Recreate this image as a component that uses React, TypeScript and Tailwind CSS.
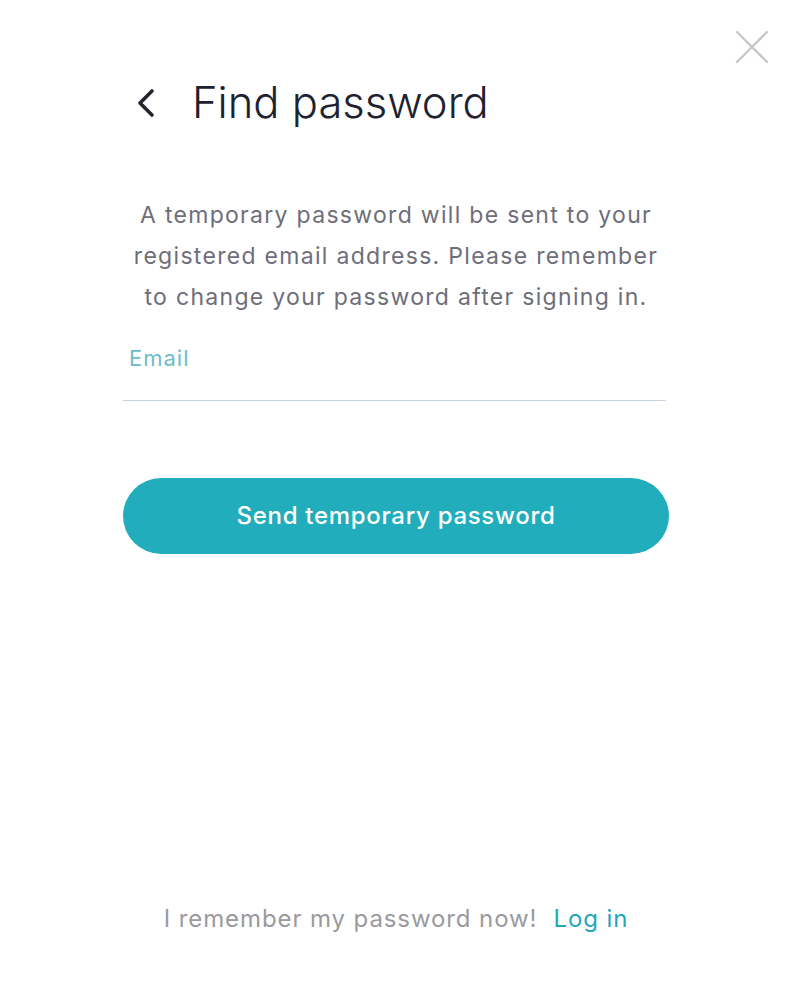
import React from "react";

export default function App() {
  return (
    <div className="relative w-[792px] h-[996px] bg-white" style={{ fontFamily: "Inter, 'Noto Sans', sans-serif" }}>
      <button className="absolute left-[735px] top-[30px] w-[34px] h-[34px] flex items-center justify-center">
        <svg width="34" height="34" viewBox="0 0 34 34" fill="none">
          <path d="M2 2L32 32M32 2L2 32" stroke="#c8c8c8" strokeWidth="2.4" strokeLinecap="round" />
        </svg>
      </button>
      <div className="mx-auto w-[546px] flex flex-col pt-[76px]">
        <div className="flex items-center h-[54px]">
          <svg className="ml-[12px]" width="22" height="30" viewBox="0 0 22 30" fill="none">
            <path d="M17 3L5 15L17 27" stroke="#222630" strokeWidth="3.6" strokeLinecap="round" strokeLinejoin="round" />
          </svg>
          <h1 className="ml-[35px] text-[43.5px] leading-none text-[#1e2230] font-light">Find password</h1>
        </div>
        <p className="mt-[65px] text-center text-[23px] leading-[41px] tracking-[1.3px] text-[#6e6e7a]">
          A temporary password will be sent to your
          <br />
          registered email address. Please remember
          <br />
          to change your password after signing in.
        </p>
        <div className="mt-[25px] pl-[6px] text-[22px] leading-[30px] tracking-[1px] text-[#6cbcc8]">Email</div>
        <div className="mt-[27px] h-px w-[543px] bg-[#c4d2e2]" />
        <button className="mt-[77px] h-[76px] w-[546px] rounded-full bg-[#22adbc] text-white text-[24px] tracking-[0.7px] font-medium">
          Send temporary password
        </button>
        <div className="mt-[349px] flex justify-center text-[24px] leading-[32px] tracking-[0.9px]">
          <span className="text-[#9a9a9e]">I remember my password now!</span>
          <span className="ml-[16px] text-[#22a8ba]">Log in</span>
        </div>
      </div>
    </div>
  );
}
